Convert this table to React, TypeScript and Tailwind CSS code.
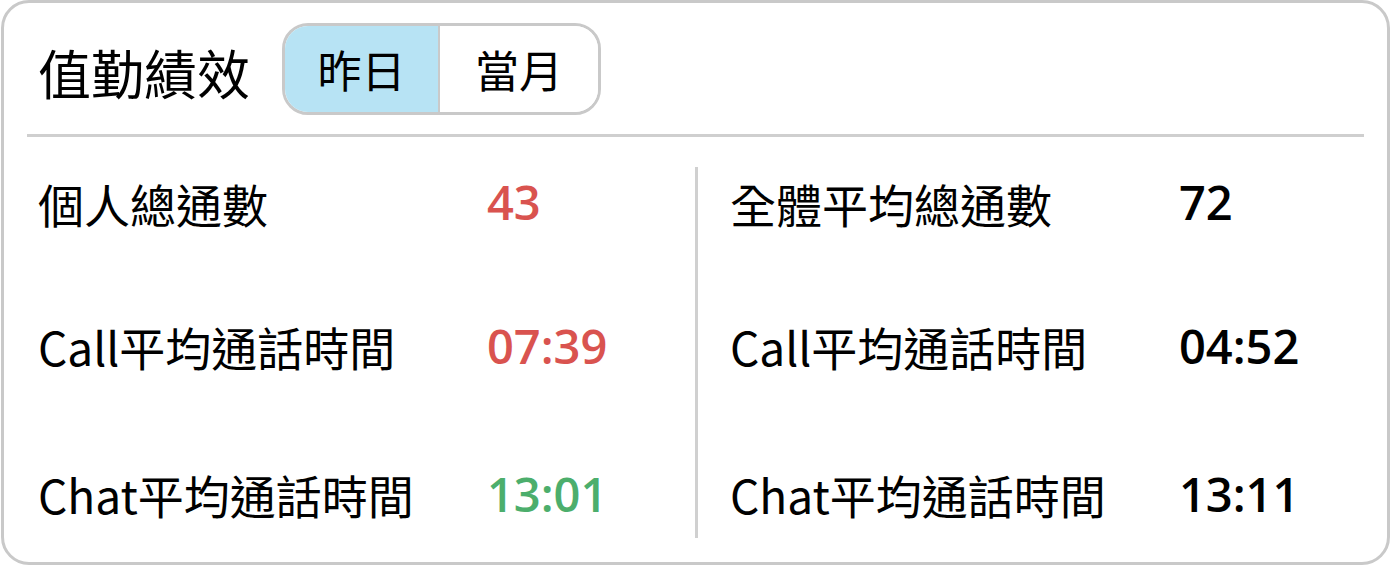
const cjk = "font-['Noto_Sans_CJK_TC','Noto_Sans',sans-serif]";
const num = "font-['Open_Sans','Noto_Sans',sans-serif] font-semibold";

type Row = { label: string; value: string; color: string };

const mine: Row[] = [
  { label: "個人總通數", value: "43", color: "text-[#d9534f]" },
  { label: "Call平均通話時間", value: "07:39", color: "text-[#d9534f]" },
  { label: "Chat平均通話時間", value: "13:01", color: "text-[#4cae6c]" },
];

const everyone: Row[] = [
  { label: "全體平均總通數", value: "72", color: "text-black" },
  { label: "Call平均通話時間", value: "04:52", color: "text-black" },
  { label: "Chat平均通話時間", value: "13:11", color: "text-black" },
];

const rowHeights = ["h-[131px]", "h-[156px]", "h-[140px]"];

const StatColumn = ({ rows }: { rows: Row[] }) => (
  <div className="flex flex-col">
    {rows.map((r, i) => (
      <div key={r.label} className={`grid grid-cols-[449px_1fr] items-center shrink-0 ${rowHeights[i]}`}>
        <span className={`${cjk} text-[46px] leading-none text-black`}>{r.label}</span>
        <span className={`${num} text-[47px] leading-none ${r.color}`}>{r.value}</span>
      </div>
    ))}
  </div>
);

export default function App() {
  return (
    <div className="w-[1391px] h-[565px] bg-white">
      <div className="h-full border-[3px] border-[#c9c9c9] rounded-[28px] flex flex-col mx-[1px]">
        <div className="flex shrink-0 items-center pl-[34px] pt-[8px] h-[131px]">
          <h1 className={`${cjk} text-[53px] leading-none text-black font-normal`}>值勤績效</h1>
          <div className="ml-[32px] mt-[-8px] flex h-[92px] w-[319px] rounded-[26px] border-[3px] border-[#c9c9c9] overflow-hidden">
            <button className={`${cjk} w-[155px] bg-[#b7e3f4] border-r-[2px] border-[#c9c9c9] text-[44px] leading-none text-black`}>
              昨日
            </button>
            <button className={`${cjk} flex-1 bg-white text-[44px] leading-none text-black`}>當月</button>
          </div>
        </div>
        <div className="mx-[23px] h-[3px] shrink-0 bg-[#cfcfcf]" />
        <div className="flex flex-1 min-h-0">
          <div className="w-[691px] pl-[34px]">
            <StatColumn rows={mine} />
          </div>
          <div className="w-[3px] bg-[#d0d0d0] mt-[30px] mb-[24px]" />
          <div className="flex-1 pl-[32px]">
            <StatColumn rows={everyone} />
          </div>
        </div>
      </div>
    </div>
  );
}
